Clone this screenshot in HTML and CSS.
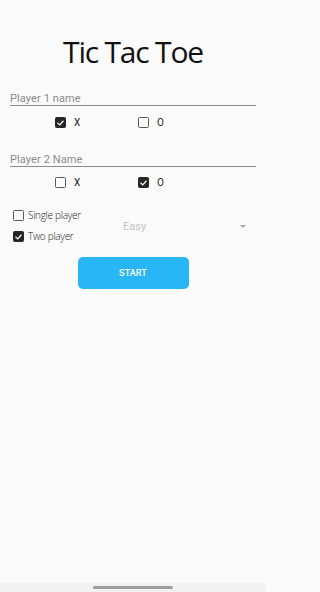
FILE: index.html
```html
<!DOCTYPE html>
<html>
<head>
<meta charset="utf-8">
<link rel="stylesheet" href="styles.css">
</head>
<body>
<div class="screen">
  <h1 class="title">Tic Tac Toe</h1>

  <div class="field field-1"><span class="hint">Player 1 name</span></div>
  <div class="choice-row row-1">
    <label class="choice"><span class="box checked"><svg viewBox="0 0 12 12"><path d="M2.6 6.2 L5 8.5 L9.4 3.6" /></svg></span><span class="mark">X</span></label>
    <label class="choice"><span class="box"></span><span class="mark">O</span></label>
  </div>

  <div class="field field-2"><span class="hint">Player 2 Name</span></div>
  <div class="choice-row row-2">
    <label class="choice"><span class="box"></span><span class="mark">X</span></label>
    <label class="choice"><span class="box checked"><svg viewBox="0 0 12 12"><path d="M2.6 6.2 L5 8.5 L9.4 3.6" /></svg></span><span class="mark">O</span></label>
  </div>

  <div class="mode">
    <div class="mode-list">
      <label class="mode-item"><span class="box"></span><span class="mode-text">Single player</span></label>
      <label class="mode-item"><span class="box checked"><svg viewBox="0 0 12 12"><path d="M2.6 6.2 L5 8.5 L9.4 3.6" /></svg></span><span class="mode-text">Two player</span></label>
    </div>
    <div class="select">
      <span class="select-text">Easy</span>
      <span class="caret"></span>
    </div>
  </div>

  <div class="actions">
    <button class="start">START</button>
  </div>

  <div class="navbar"><span class="handle"></span></div>
</div>
</body>
</html>
```

FILE: styles.css
```css
html, body {
  margin: 0;
  padding: 0;
  background: #fafafa;
}

.screen {
  width: 266px;
  min-height: 592px;
  display: flex;
  flex-direction: column;
  font-family: Roboto, "Noto Sans", sans-serif;
}

.title {
  margin: 34px 0 0 0;
  height: 36px;
  line-height: 36px;
  text-align: center;
  font-family: "Open Sans", sans-serif;
  font-weight: 400;
  font-size: 30px;
  letter-spacing: -1.2px;
  color: #111;
}

.field {
  margin: 0 10px;
  padding-bottom: 1px;
  border-bottom: 1px solid #8c8c8c;
  height: 14px;
  line-height: 14px;
}

.field-1 { margin-top: 20px; }
.field-2 { margin-top: 23px; }

.hint {
  font-size: 11px;
  color: #8a8a8a;
  letter-spacing: 0.1px;
}

.choice-row {
  display: flex;
  padding-left: 55px;
  height: 11px;
}

.row-1 { margin-top: 11px; }
.row-2 { margin-top: 10px; }

.choice {
  width: 83px;
  display: flex;
  align-items: center;
  gap: 8px;
}

.box {
  box-sizing: border-box;
  width: 11px;
  height: 11px;
  border: 1.5px solid #5a5a5a;
  border-radius: 1.5px;
  background: transparent;
  display: flex;
  align-items: center;
  justify-content: center;
  flex: none;
}

.box.checked {
  background: #262626;
  border-color: #262626;
}

.box svg {
  width: 10px;
  height: 10px;
}

.box svg path {
  fill: none;
  stroke: #fff;
  stroke-width: 1.6;
  stroke-linecap: square;
}

.mark {
  font-size: 10px;
  color: #222;
  line-height: 11px;
}

.mode {
  margin-top: 22px;
  display: flex;
  align-items: center;
}

.mode-list {
  padding-left: 13px;
  width: 123px;
  box-sizing: border-box;
  display: flex;
  flex-direction: column;
  gap: 10px;
}

.mode-item {
  display: flex;
  align-items: center;
  gap: 4px;
  height: 11px;
}

.mode-text {
  font-family: "Open Sans", sans-serif;
  font-weight: 300;
  font-size: 10px;
  letter-spacing: -0.3px;
  color: #222;
  line-height: 11px;
}

.select {
  flex: 1;
  display: flex;
  align-items: center;
  justify-content: space-between;
  padding-right: 20px;
}

.select-text {
  font-size: 11px;
  color: #c4c4c4;
}

.caret {
  width: 0;
  height: 0;
  border-left: 3px solid transparent;
  border-right: 3px solid transparent;
  border-top: 3px solid #a8a8a8;
}

.actions {
  margin-top: 15px;
  display: flex;
  justify-content: center;
}

.start {
  width: 111px;
  height: 32px;
  border: none;
  border-radius: 5px;
  background: #29b6f6;
  color: #fff;
  font-family: Roboto, sans-serif;
  font-weight: 500;
  font-size: 9px;
  letter-spacing: 0.1px;
  padding: 0;
}

.navbar {
  margin-top: auto;
  height: 9px;
  background: #f2f2f2;
  display: flex;
  justify-content: center;
  padding-top: 3px;
  box-sizing: border-box;
}

.handle {
  width: 80px;
  height: 3px;
  border-radius: 2px;
  background: #9e9e9e;
}
```
